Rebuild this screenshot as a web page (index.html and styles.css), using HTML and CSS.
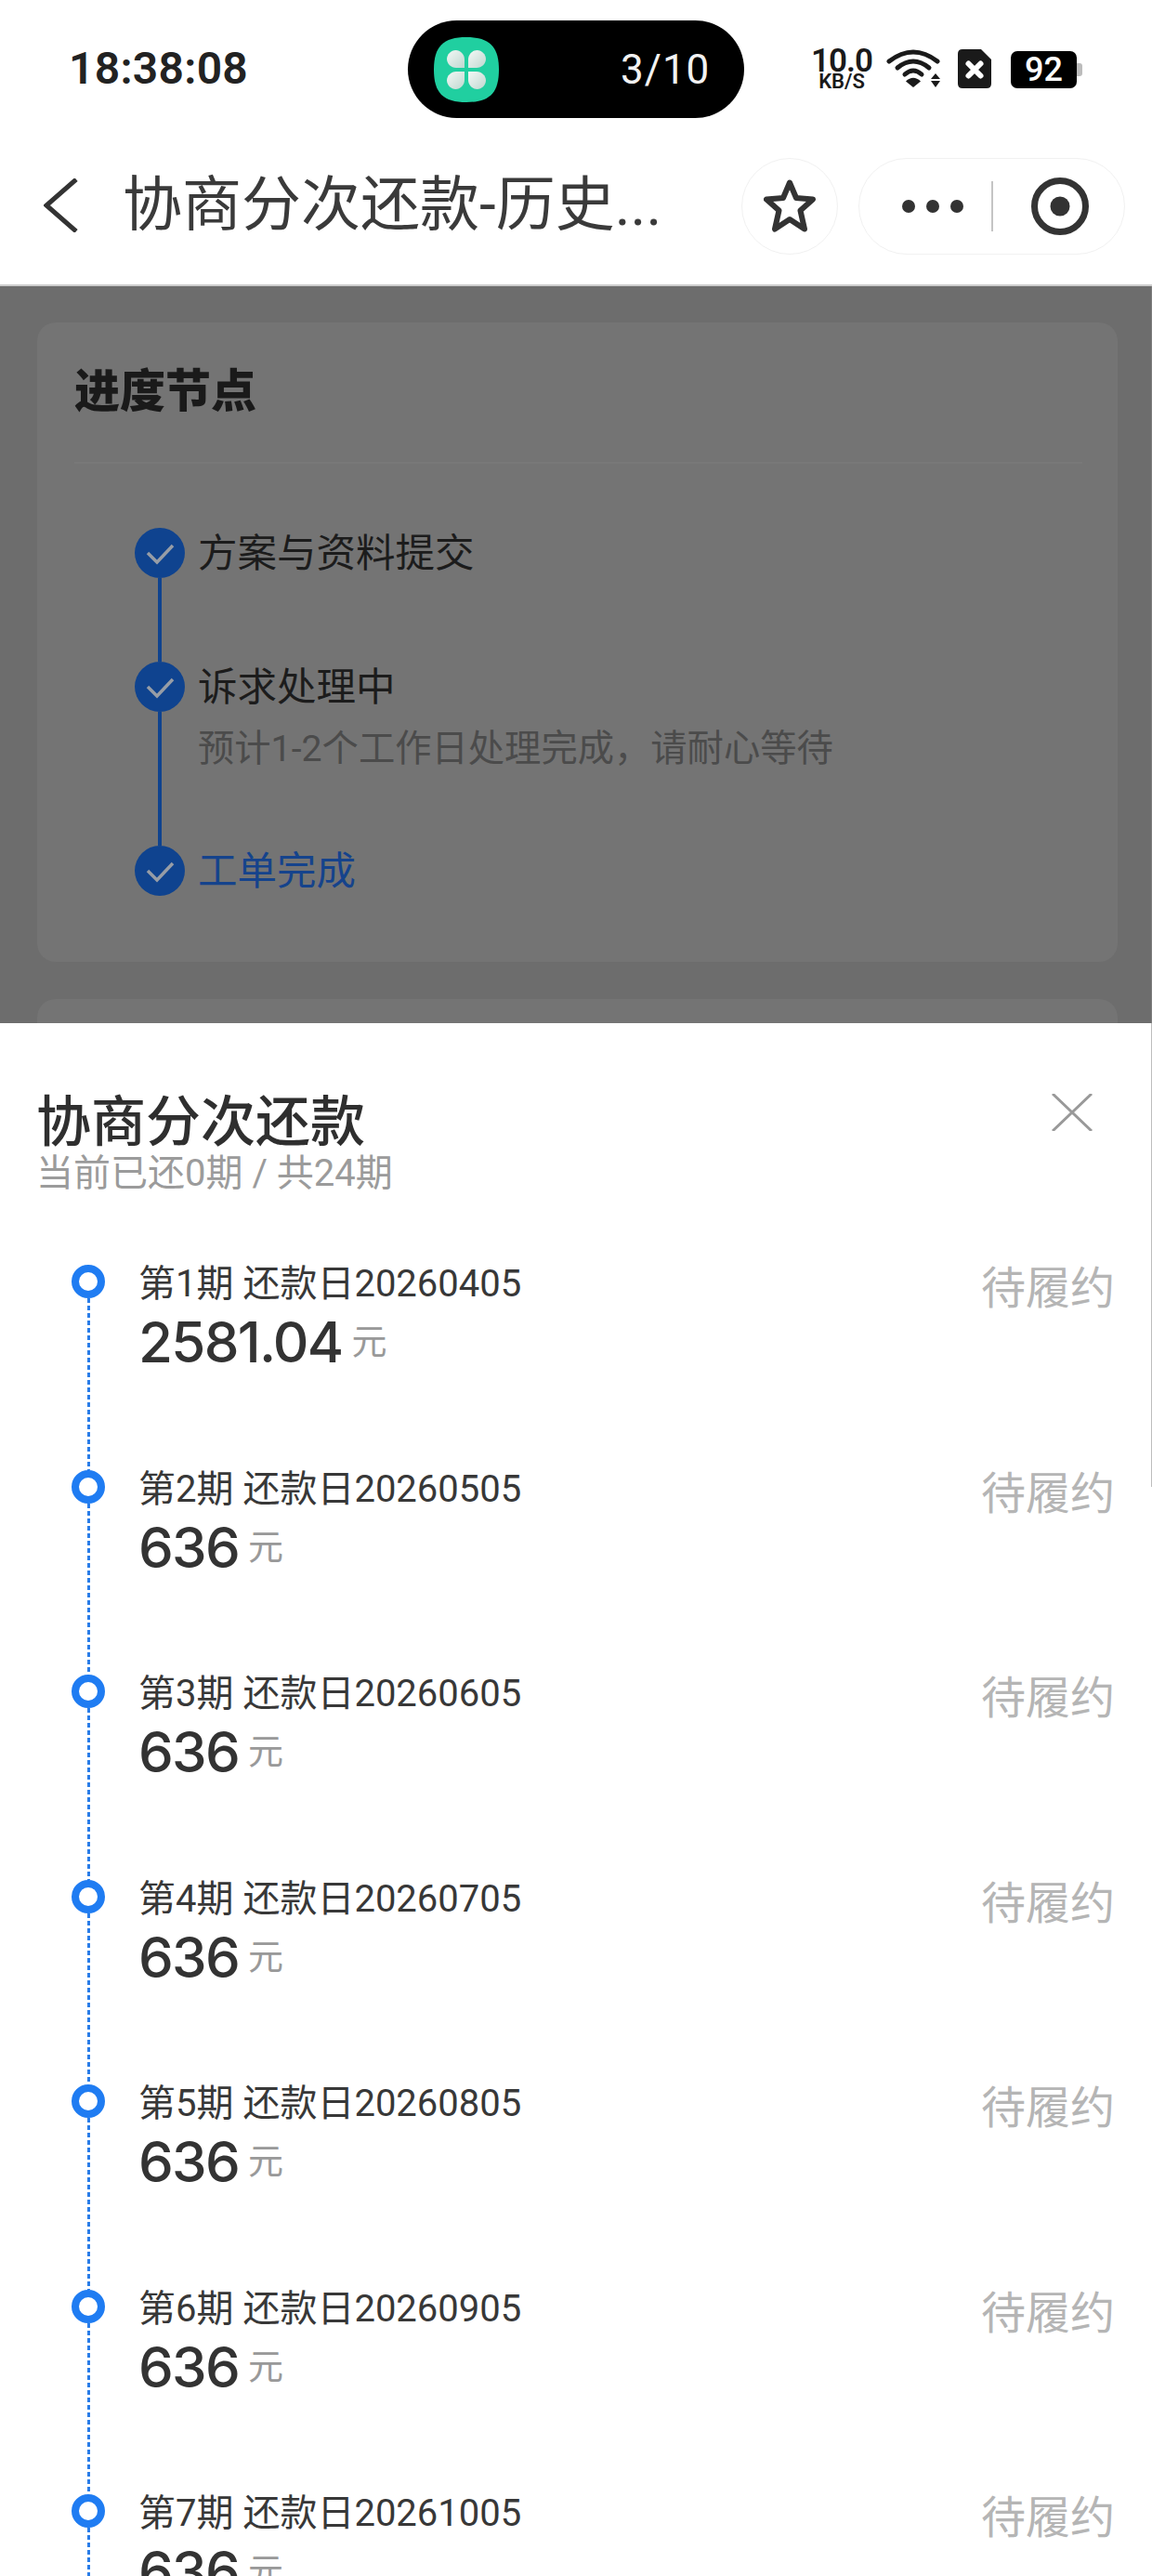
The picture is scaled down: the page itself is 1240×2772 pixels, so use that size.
FILE: index.html
```html
<!DOCTYPE html>
<html lang="zh-CN">
<head>
<meta charset="utf-8">
<title>协商分次还款</title>
<link rel="stylesheet" href="styles.css">
</head>
<body>
<div class="page">
  <header class="status">
    <div class="time">18:38:08</div>
    <div class="pill">
      <svg class="app" viewBox="0 0 70 70" width="70" height="70">
        <defs>
          <linearGradient id="petal" x1="0" y1="0" x2="1" y2="1"><stop offset="0" stop-color="#f4f8f6"/><stop offset="1" stop-color="#bfd8d0"/></linearGradient>
        </defs>
        <path class="app-bg" d="M35 0C60 0 70 10 70 35S60 70 35 70 0 60 0 35 10 0 35 0Z"/>
        <path fill="url(#petal)" d="M33 33H24C18.500 33 14 28.500 14 23.500S18.500 14 23.500 14 33 18.500 33 24Z"/>
        <path fill="url(#petal)" d="M37 33H46C51.500 33 56 28.500 56 23.500S51.500 14 46.500 14 37 18.500 37 24Z"/>
        <path fill="url(#petal)" d="M33 37H24C18.500 37 14 41.500 14 46.500S18.500 56 23.500 56 33 51.500 33 46Z"/>
        <path fill="url(#petal)" d="M37 37H46C51.500 37 56 41.500 56 46.500S51.500 56 46.500 56 37 51.500 37 46Z"/>
      </svg>
      <span class="count">3/10</span>
    </div>
    <div class="sys">
      <div class="speed"><span class="speed-num">10.0</span><span class="speed-unit">KB/S</span></div>
      <svg class="wifi" viewBox="0 0 58 42" width="58" height="42">
        <g class="wifi-arcs"><path d="M3 13Q29-7 55 13"/><path d="M12 20Q29 6 46 20"/><path d="M20 27Q29 19 38 27"/></g>
        <path class="ink" d="M29 41L21 34.500Q29 27 37 34.500Z"/>
        <path class="ink" d="M48 32H58L53 26ZM48 34H58L53 41Z"/>
      </svg>
      <svg class="sim" viewBox="0 0 36 42" width="36" height="42">
        <path class="ink" d="M5 0H25L36 11V37Q36 42 31 42H5Q0 42 0 37V5Q0 0 5 0Z"/>
        <path class="sim-x" d="M11.500 15.500L24.500 28.500M24.500 15.500L11.500 28.500"/>
      </svg>
      <div class="battery"><span class="level">92</span><span class="nub"></span></div>
    </div>
  </header>

  <nav class="nav">
    <svg class="back" viewBox="0 0 37 58" width="37" height="58"><path d="M35 1L3 29L35 57"/></svg>
    <div class="nav-title">协商分次还款-历史...</div>
    <div class="fav">
      <svg viewBox="0 0 56 58" width="56" height="58"><path class="star" d="M28 3.500L35 20L53 21.500L39.500 33.500L44 53.500L28 43L12 53.500L16.500 33.500L3 21.500L21 20Z"/></svg>
    </div>
    <div class="capsule">
      <div class="dots"><i></i><i></i><i></i></div>
      <div class="cap-div"></div>
      <svg class="target" viewBox="0 0 62 62" width="62" height="62"><circle class="ring" cx="31" cy="31" r="27.500"/><circle class="ink-dark" cx="31" cy="31" r="10.500"/></svg>
    </div>
  </nav>

  <main class="dim">
    <section class="card">
      <h2 class="card-title">进度节点</h2>
      <div class="card-rule"></div>
      <ol class="steps">
        <li class="step step-a">
          <div class="marker">
            <svg class="tick" viewBox="0 0 54 54" width="54" height="54"><circle class="tick-bg" cx="27" cy="27" r="27"/><path class="tick-mark" d="M14 27L24 37L41 19"/></svg>
            <span class="conn"></span>
          </div>
          <div class="step-body"><div class="step-name">方案与资料提交</div></div>
        </li>
        <li class="step step-b">
          <div class="marker">
            <svg class="tick" viewBox="0 0 54 54" width="54" height="54"><circle class="tick-bg" cx="27" cy="27" r="27"/><path class="tick-mark" d="M14 27L24 37L41 19"/></svg>
            <span class="conn"></span>
          </div>
          <div class="step-body"><div class="step-name">诉求处理中</div><div class="step-sub">预计1-2个工作日处理完成&#xFF0C;请耐心等待</div></div>
        </li>
        <li class="step">
          <div class="marker">
            <svg class="tick" viewBox="0 0 54 54" width="54" height="54"><circle class="tick-bg" cx="27" cy="27" r="27"/><path class="tick-mark" d="M14 27L24 37L41 19"/></svg>
          </div>
          <div class="step-body"><div class="step-name step-done">工单完成</div></div>
        </li>
      </ol>
    </section>
    <section class="card card-next"></section>
    <span class="edge-dim"></span>
  </main>

  <section class="sheet">
    <div class="sheet-head">
      <div>
        <h1 class="sheet-title">协商分次还款</h1>
        <p class="sheet-sub">当前已还0期 / 共24期</p>
      </div>
      <svg class="close" viewBox="0 0 44 40" width="44" height="40"><path d="M1 0L43 40M43 0L1 40"/></svg>
    </div>
    <ul class="plan">
      <li class="term"><div class="rail"><span class="dot"></span><span class="dash"></span></div><div class="term-main"><div class="term-date">第1期 还款日20260405</div><div class="term-money"><span class="amount">2581.04</span><span class="unit">元</span></div></div><div class="term-state">待履约</div></li>
      <li class="term"><div class="rail"><span class="dot"></span><span class="dash"></span></div><div class="term-main"><div class="term-date">第2期 还款日20260505</div><div class="term-money"><span class="amount">636</span><span class="unit">元</span></div></div><div class="term-state">待履约</div></li>
      <li class="term"><div class="rail"><span class="dot"></span><span class="dash"></span></div><div class="term-main"><div class="term-date">第3期 还款日20260605</div><div class="term-money"><span class="amount">636</span><span class="unit">元</span></div></div><div class="term-state">待履约</div></li>
      <li class="term"><div class="rail"><span class="dot"></span><span class="dash"></span></div><div class="term-main"><div class="term-date">第4期 还款日20260705</div><div class="term-money"><span class="amount">636</span><span class="unit">元</span></div></div><div class="term-state">待履约</div></li>
      <li class="term"><div class="rail"><span class="dot"></span><span class="dash"></span></div><div class="term-main"><div class="term-date">第5期 还款日20260805</div><div class="term-money"><span class="amount">636</span><span class="unit">元</span></div></div><div class="term-state">待履约</div></li>
      <li class="term"><div class="rail"><span class="dot"></span><span class="dash"></span></div><div class="term-main"><div class="term-date">第6期 还款日20260905</div><div class="term-money"><span class="amount">636</span><span class="unit">元</span></div></div><div class="term-state">待履约</div></li>
      <li class="term"><div class="rail"><span class="dot"></span><span class="dash"></span></div><div class="term-main"><div class="term-date">第7期 还款日20261005</div><div class="term-money"><span class="amount">636</span><span class="unit">元</span></div></div><div class="term-state">待履约</div></li>
    </ul>
    <span class="edge"></span>
  </section>
</div>
</body>
</html>
```
FILE: styles.css
```css
* { box-sizing: border-box; margin: 0; padding: 0; }
html, body { background: #fff; }
body { font-family: Roboto, "Noto Sans CJK SC", sans-serif; color: #333; }
ul, ol { list-style: none; }
.page { width: 1240px; height: 2772px; overflow: hidden; display: flex; flex-direction: column; }

/* status bar */
.status { height: 150px; flex: none; display: flex; align-items: flex-start; padding: 22px 0 0 74px; }
.time { width: 365px; height: 105px; line-height: 104px; font-size: 48px; font-weight: 600; letter-spacing: .3px; color: #222; }
.pill { width: 362px; height: 105px; background: #000; border-radius: 52.5px; display: flex; align-items: center; padding-left: 28px; }
.app-bg { fill: #20cfa0; }
.count { margin-left: 131px; font-size: 44px; letter-spacing: 1px; color: #f2f2f2; }
.sys { display: flex; margin-left: 73px; margin-top: 31px; align-items: flex-start; }
.speed { width: 64px; display: flex; flex-direction: column; align-items: center; color: #1a1a1a; }
.speed-num { font-size: 35px; font-weight: 600; line-height: 26px; letter-spacing: -1px; }
.speed-unit { font-size: 22px; font-weight: 600; line-height: 17px; }
.wifi { margin-left: 16px; }
.wifi-arcs path { fill: none; stroke: #1a1a1a; stroke-width: 5; stroke-linecap: round; }
.ink { fill: #1a1a1a; }
.sim { margin-left: 19px; }
.sim-x { fill: none; stroke: #fff; stroke-width: 6; stroke-linecap: round; }
.battery { display: flex; align-items: center; margin-left: 21px; margin-top: 2px; }
.level { width: 71px; height: 40px; background: #000; border-radius: 7px; color: #fff; text-align: center; font-size: 36px; font-weight: 500; line-height: 40px; }
.nub { width: 6px; height: 14px; background: #bcbcbc; border-radius: 0 3px 3px 0; }

/* nav */
.nav { height: 156px; flex: none; display: flex; align-items: flex-start; padding: 20px 0 0 47px; }
.back { margin-top: 22px; flex: none; }
.back path { fill: none; stroke: #333; stroke-width: 5; }
.nav-title { width: 664px; margin-left: 48px; margin-top: 20px; height: 62px; line-height: 62px; font-size: 64px; white-space: nowrap; color: #3a3a3a; }
.fav { width: 104px; height: 104px; margin-left: 2px; flex: none; border: 1.5px solid #f1f1f1; border-radius: 50%; display: flex; align-items: center; justify-content: center; }
.star { fill: none; stroke: #333; stroke-width: 6; stroke-linejoin: round; }
.capsule { width: 287px; height: 104px; margin-left: 22px; flex: none; border: 1.5px solid #f1f1f1; border-radius: 52px; display: flex; align-items: center; padding-left: 46px; }
.dots { display: flex; gap: 12px; }
.dots i { width: 14px; height: 14px; border-radius: 50%; background: #333; }
.cap-div { width: 1.5px; height: 54px; background: #c4c4c4; margin-left: 30px; }
.target { margin-left: 41px; }
.ring { fill: none; stroke: #333; stroke-width: 7; }
.ink-dark { fill: #333; }

/* dimmed page */
.dim { height: 795px; flex: none; overflow: hidden; position: relative; background: #6d6d6d; border-top: 2px solid #cdcdcd; padding: 39px 37px 0 40px; }
.card { height: 688px; background: #747474; border-radius: 20px; padding: 51px 38px 0 40px; }
.card-next { margin-top: 40px; }
.card-title { font-size: 49px; line-height: 48px; font-weight: 900; color: #1a1a1a; }
.card-rule { height: 2px; background: #787878; margin-top: 51px; }
.steps { margin: 69px 0 0 65px; }
.step { display: flex; gap: 14px; }
.step-a { height: 144px; }
.step-b { height: 198px; }
.marker { width: 54px; display: flex; flex-direction: column; align-items: center; flex: none; }
.tick { display: block; flex: none; }
.tick-bg { fill: #0f438f; }
.tick-mark { fill: none; stroke: #979da6; stroke-width: 3.5; }
.conn { flex: 1; width: 4px; background: #0f438f; }
.step-body { padding-top: 1px; }
.step-name { font-size: 42.500px; line-height: 54px; color: #1c1c1c; }
.step-done { color: #15438c; }
.step-sub { font-size: 39.300px; line-height: 50px; margin-top: 14px; color: #4b4b4b; white-space: nowrap; }
.edge-dim { position: absolute; right: 0; top: 0; bottom: 0; width: 1px; background: #7d7d7d; }

/* bottom sheet */
.sheet { flex: 1; background: #fff; position: relative; overflow: hidden; padding: 77px 40px 0 39px; }
.sheet-head { display: flex; justify-content: space-between; align-items: flex-start; }
.sheet-title { font-size: 59px; line-height: 60px; font-weight: 500; color: #2f2f2f; }
.sheet-sub { font-size: 40px; line-height: 40px; margin-top: 5px; color: #9b9b9b; white-space: pre; }
.close { margin: -1px 24px 0 0; flex: none; }
.close path { fill: none; stroke: #999; stroke-width: 3; }
.plan { margin-top: 78px; }
.term { height: 220.500px; display: flex; align-items: flex-start; }
.rail { width: 36px; height: 100%; margin-left: 38px; display: flex; flex-direction: column; align-items: center; flex: none; }
.dot { width: 36px; height: 36px; border: 8px solid #1f7cf2; border-radius: 50%; flex: none; }
.dash { flex: 1; width: 3px; background: repeating-linear-gradient(to bottom, #2a7de8 0, #2a7de8 5px, transparent 5px, transparent 8px); }
.term-main { margin-left: 36px; padding-top: 1px; flex: 1; }
.term-date { font-size: 40px; line-height: 40px; color: #383838; white-space: nowrap; }
.term-money { display: flex; align-items: center; gap: 10px; margin-top: 11px; }
.amount { font-family: Inter, Roboto, sans-serif; font-size: 60px; line-height: 62px; font-weight: 500; letter-spacing: -1.700px; color: #333; }
.unit { font-size: 38px; line-height: 40px; color: #999; }
.term-state { font-size: 48px; line-height: 52px; color: #b5b5b5; }
.edge { position: absolute; top: 0; right: 0; width: 1.500px; height: 499px; background: #bdbdbd; }
```
